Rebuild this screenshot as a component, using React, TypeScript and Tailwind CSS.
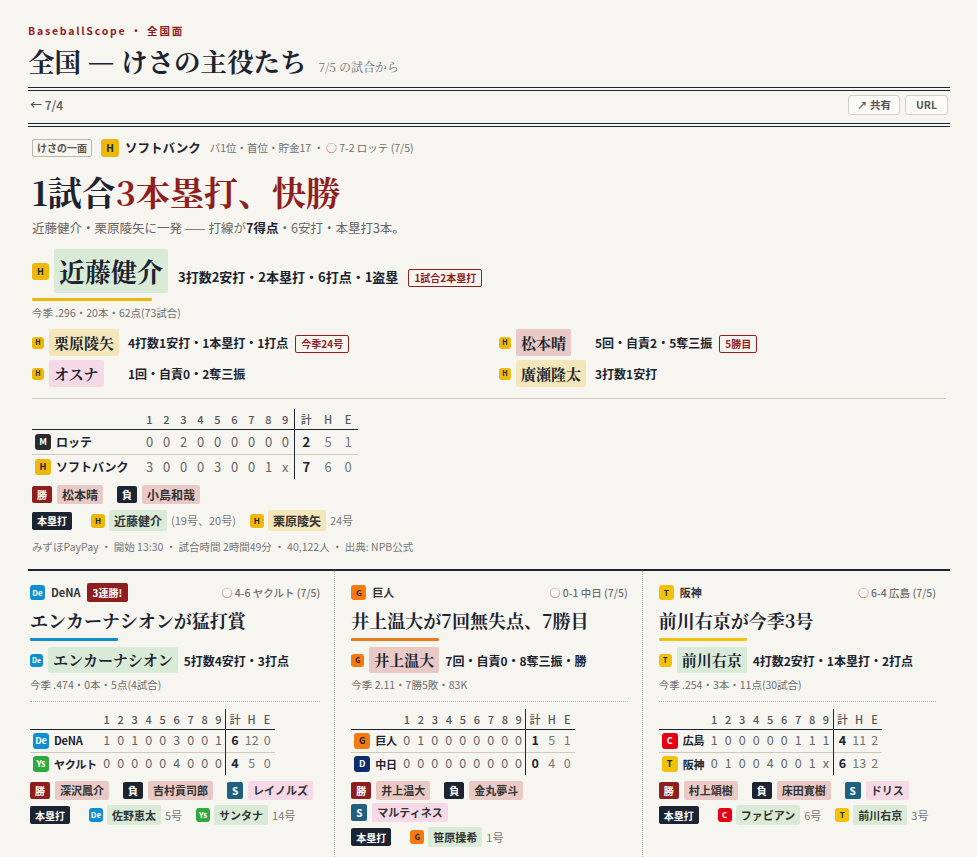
const serif = "font-['Noto_Serif_CJK_JP','Noto_Serif_JP','Liberation_Serif','Noto_Sans_CJK_JP',serif]";

const TEAM: Record<string, string> = {
  H: 'bg-[#eeb70c] text-[#1b2430]',
  T: 'bg-[#f2c10a] text-[#1b2430]',
  M: 'bg-[#2a2a2a] text-white',
  De: 'bg-[#0f8fd0] text-white',
  Ys: 'bg-[#2fa83f] text-white',
  G: 'bg-[#f47a10] text-[#1b2430]',
  D: 'bg-[#0c2e6e] text-white',
  C: 'bg-[#e60012] text-white',
};

const CHIP = {
  green: 'bg-[#d9ebd6]',
  yellow: 'bg-[#f3e6b8]',
  pink: 'bg-[#f6d9e6]',
  rose: 'bg-[#e8c9c5]',
};

type ChipColor = keyof typeof CHIP;

const LOGO_SIZES = {
  s12: 'w-[12px] h-[12px] text-[7px]',
  s13: 'w-[13px] h-[13px] text-[7px]',
  s14: 'w-[14px] h-[14px] text-[8px]',
  s15: 'w-[15px] h-[15px] text-[8px]',
  s16: 'w-[16px] h-[16px] text-[9px]',
  s17: 'w-[17px] h-[17px] text-[9px]',
  s18: 'w-[18px] h-[18px] text-[10px]',
};

function Logo({ team, size = 's14' }: { team: string; size?: keyof typeof LOGO_SIZES }) {
  return (
    <span className={`inline-flex shrink-0 items-center justify-center rounded-[3px] font-bold leading-none ${LOGO_SIZES[size]} ${TEAM[team]}`}>
      {team}
    </span>
  );
}

function Tag({ children }: { children: React.ReactNode }) {
  return (
    <span className="inline-block shrink-0 rounded-[2px] border border-[#8f1f1f] px-[5px] py-[1px] text-[10px] font-bold leading-[14px] text-[#8f1f1f]">
      {children}
    </span>
  );
}

function Hero() {
  return (
    <section className="px-[4px] pt-[12px] pb-[10px]">
      <div className="flex h-[18px] items-center">
        <span className="rounded-[2px] border border-[#bdb8ac] px-[4px] text-[10px] font-bold leading-[16px] text-[#555]">けさの一面</span>
        <span className="ml-[9px] flex"><Logo team="H" size="s18" /></span>
        <span className="ml-[6px] text-[12.5px] font-bold text-[#1b2430]">ソフトバンク</span>
        <span className="ml-[9px] text-[10.5px] text-[#6f6f6f]">パ1位・首位・貯金17 ・ <span className="text-[#8f1f1f]">◯</span> 7-2 ロッテ (7/5)</span>
      </div>
      <h2 className={`mt-[11px] text-[34px] font-bold leading-[48px] text-[#1b2430] ${serif}`}>
        1試合<span className="text-[#8f1f1f]">3本塁打、快勝</span>
      </h2>
      <p className="mt-[3px] text-[12.5px] leading-[18px] text-[#666]">
        近藤健介・栗原陵矢に一発 —— 打線が<b className="text-[#1b2430]">7得点</b>・6安打・本塁打3本。
      </p>
      <div className="mt-[12px] flex items-center">
        <Logo team="H" size="s17" />
        <span className={`ml-[5px] rounded-[2px] bg-[#d9ebd6] px-[5px] text-[26px] font-bold leading-[44px] text-[#1b2430] ${serif}`}>近藤健介</span>
        <span className="ml-[10px] pt-[12px] text-[13px] font-bold text-[#1b2430]">3打数2安打・2本塁打・6打点・1盗塁</span>
        <span className="ml-[10px] flex pt-[14px]"><Tag>1試合2本塁打</Tag></span>
      </div>
      <div className="mt-[5px] h-[3px] w-[120px] rounded-[1px] bg-[#eeb70c]" />
      <p className="mt-[4px] text-[10.5px] leading-[16px] text-[#6f6f6f]">今季 .296・20本・62点(73試合)</p>
      <div className="mt-[8px] grid grid-cols-2 gap-x-[20px] gap-y-[4px] border-b border-[#cfc9bb] pb-[11px]">
        <SubPlayer name="栗原陵矢" color="yellow" stat="4打数1安打・1本塁打・1打点" tag="今季24号" />
        <SubPlayer name="松本晴" color="rose" stat="5回・自責2・5奪三振" tag="5勝目" />
        <SubPlayer name="オスナ" color="pink" stat="1回・自責0・2奪三振" />
        <SubPlayer name="廣瀬隆太" color="yellow" stat="3打数1安打" />
      </div>
    </section>
  );
}

function SubPlayer({ name, color, stat, tag }: { name: string; color: ChipColor; stat: string; tag?: string }) {
  return (
    <div className="flex h-[27px] items-center">
      <Logo team="H" size="s12" />
      <span className="ml-[5px] w-[70px] shrink-0">
        <span className={`inline-block rounded-[2px] px-[5px] text-[15px] font-bold leading-[27px] text-[#1b2430] ${serif} ${CHIP[color]}`}>{name}</span>
      </span>
      <span className="ml-[9px] pt-[1px] text-[12px] font-bold text-[#1b2430]">{stat}</span>
      {tag && <span className="ml-[7px] flex pt-[3px]"><Tag>{tag}</Tag></span>}
    </div>
  );
}

type Line = { team: string; name: string; innings: string[]; r: string; h: string; e: string };

function Score({ lines, big }: { lines: Line[]; big?: boolean }) {
  const inningWidth = big ? 'w-[17px]' : 'w-[14px]';
  const digits = big ? 'text-[13px]' : 'text-[12.5px]';
  const rowH = big ? 'h-[25px]' : 'h-[23px]';
  const totals = big ? ['w-[24px]', 'w-[20px]', 'w-[20px]'] : ['w-[18px]', 'w-[16px]', 'w-[15px]'];
  return (
    <table className="border-collapse">
      <thead>
        <tr className="h-[20px] border-b border-[#1b2430] text-[11px] text-[#555]">
          <th className={`p-0 ${big ? 'w-[109px]' : ''}`} />
          {[1, 2, 3, 4, 5, 6, 7, 8, 9].map((n) => (
            <th key={n} className={`p-0 text-center font-medium ${inningWidth} ${n === 9 ? 'border-r border-[#1b2430]' : ''}`}>{n}</th>
          ))}
          <th className={`p-0 text-center font-medium ${totals[0]}`}>計</th>
          <th className={`p-0 text-center font-medium ${totals[1]}`}>H</th>
          <th className={`p-0 text-center font-medium ${totals[2]}`}>E</th>
        </tr>
      </thead>
      <tbody>
        {lines.map((l, i) => (
          <tr key={l.name} className={`${rowH} ${i === 0 ? 'border-b border-[#cfc9bb]' : ''}`}>
            <td className="p-0 pr-[3px]">
              <div className="flex items-center whitespace-nowrap pl-[3px]">
                <Logo team={l.team} size="s16" />
                <span className={`ml-[5px] font-bold text-[#1b2430] ${big ? 'text-[12px]' : 'text-[11px] tracking-[-0.25px]'}`}>{l.name}</span>
              </div>
            </td>
            {l.innings.map((v, j) => (
              <td key={j} className={`p-0 text-center text-[#666] ${digits} ${inningWidth} ${j === 8 ? 'border-r border-[#1b2430]' : ''}`}>{v}</td>
            ))}
            <td className={`p-0 text-center font-bold text-[#1b2430] ${digits}`}>{l.r}</td>
            <td className={`p-0 text-center text-[#777] ${digits}`}>{l.h}</td>
            <td className={`p-0 text-center text-[#777] ${digits}`}>{l.e}</td>
          </tr>
        ))}
      </tbody>
    </table>
  );
}

function Decision({ label, name, color, big }: { label: string; name: string; color: ChipColor; big?: boolean }) {
  const bg = label === '勝' ? 'bg-[#8f1f1f]' : label === '負' ? 'bg-[#1b2430]' : 'bg-[#1f5f7f]';
  return (
    <span className="inline-flex items-center">
      <span className={`inline-flex h-[17px] items-center justify-center rounded-[2px] text-[10px] font-bold text-white ${label === 'S' ? 'w-[16px]' : 'w-[20px]'} ${bg}`}>{label}</span>
      <span className={`ml-[5px] rounded-[2px] px-[5px] font-bold leading-[19px] text-[#333] ${big ? 'text-[12px]' : 'text-[11px]'} ${CHIP[color]}`}>{name}</span>
    </span>
  );
}

type Homer = { team: string; name: string; note: string; color?: ChipColor };

function Homers({ items, big }: { items: Homer[]; big?: boolean }) {
  return (
    <div className="flex items-center">
      <span className="inline-flex h-[18px] w-[40px] items-center justify-center rounded-[2px] bg-[#1b2430] text-[10px] font-bold text-white">本塁打</span>
      <span className="ml-[19px] flex items-center gap-x-[14px]">
        {items.map((h) => (
          <span key={h.name} className="inline-flex items-center">
            <Logo team={h.team} size="s14" />
            <span className={`ml-[4px] rounded-[2px] px-[5px] font-bold text-[#333] ${big ? 'text-[12px] leading-[21px]' : 'text-[11px] leading-[20px]'} ${CHIP[h.color ?? 'green']}`}>{h.name}</span>
            <span className="ml-[4px] text-[11px] text-[#777]">{h.note}</span>
          </span>
        ))}
      </span>
    </div>
  );
}

type Game = {
  team: string;
  name: string;
  streak?: string;
  result: string;
  title: string;
  accent: string;
  player: string;
  chip: ChipColor;
  stat: string;
  season: string;
  lines: Line[];
  decisions: { label: string; name: string; color: ChipColor }[][];
  homers: Homer[];
};

function split(s: string) {
  return s.split('');
}

const GAMES: Game[] = [
  {
    team: 'De',
    name: 'DeNA',
    streak: '3連勝!',
    result: '4-6 ヤクルト (7/5)',
    title: 'エンカーナシオンが猛打賞',
    accent: 'bg-[#0f8fd0]',
    player: 'エンカーナシオン',
    chip: 'green',
    stat: '5打数4安打・3打点',
    season: '今季 .474・0本・5点(4試合)',
    lines: [
      { team: 'De', name: 'DeNA', innings: split('101003001'), r: '6', h: '12', e: '0' },
      { team: 'Ys', name: 'ヤクルト', innings: split('000004000'), r: '4', h: '5', e: '0' },
    ],
    decisions: [[
      { label: '勝', name: '深沢鳳介', color: 'rose' },
      { label: '負', name: '吉村貢司郎', color: 'rose' },
      { label: 'S', name: 'レイノルズ', color: 'pink' },
    ]],
    homers: [
      { team: 'De', name: '佐野恵太', note: '5号' },
      { team: 'Ys', name: 'サンタナ', note: '14号' },
    ],
  },
  {
    team: 'G',
    name: '巨人',
    result: '0-1 中日 (7/5)',
    title: '井上温大が7回無失点、7勝目',
    accent: 'bg-[#e97b1c]',
    player: '井上温大',
    chip: 'rose',
    stat: '7回・自責0・8奪三振・勝',
    season: '今季 2.11・7勝5敗・83K',
    lines: [
      { team: 'G', name: '巨人', innings: split('010000000'), r: '1', h: '5', e: '1' },
      { team: 'D', name: '中日', innings: split('000000000'), r: '0', h: '4', e: '0' },
    ],
    decisions: [
      [
        { label: '勝', name: '井上温大', color: 'rose' },
        { label: '負', name: '金丸夢斗', color: 'rose' },
      ],
      [{ label: 'S', name: 'マルティネス', color: 'pink' }],
    ],
    homers: [{ team: 'G', name: '笹原操希', note: '1号' }],
  },
  {
    team: 'T',
    name: '阪神',
    result: '6-4 広島 (7/5)',
    title: '前川右京が今季3号',
    accent: 'bg-[#f2c10a]',
    player: '前川右京',
    chip: 'green',
    stat: '4打数2安打・1本塁打・2打点',
    season: '今季 .254・3本・11点(30試合)',
    lines: [
      { team: 'C', name: '広島', innings: split('100000111'), r: '4', h: '11', e: '2' },
      { team: 'T', name: '阪神', innings: split('01004001x'), r: '6', h: '13', e: '2' },
    ],
    decisions: [[
      { label: '勝', name: '村上頌樹', color: 'rose' },
      { label: '負', name: '床田寛樹', color: 'rose' },
      { label: 'S', name: 'ドリス', color: 'pink' },
    ]],
    homers: [
      { team: 'C', name: 'ファビアン', note: '6号' },
      { team: 'T', name: '前川右京', note: '3号' },
    ],
  },
];

function GameCard({ game, className }: { game: Game; className: string }) {
  return (
    <article className={`pt-[14px] pb-[10px] ${className}`}>
      <div className="flex h-[15px] items-center">
        <Logo team={game.team} size="s15" />
        <span className="ml-[6px] text-[11px] font-bold text-[#333]">{game.name}</span>
        {game.streak && (
          <span className="ml-[6px] rounded-[2px] bg-[#8f1f1f] px-[6px] text-[10px] font-bold leading-[19px] text-white">{game.streak}</span>
        )}
        <span className="ml-auto text-[10.5px] font-medium text-[#6f6f6f]"><span className="text-[#8f1f1f]">◯</span> {game.result}</span>
      </div>
      <h3 className={`mt-[7px] text-[18px] font-bold leading-[27px] text-[#1b2430] ${serif}`}>{game.title}</h3>
      <div className={`mt-[4px] h-[3px] w-[88px] rounded-[1px] ${game.accent}`} />
      <div className="mt-[6px] flex items-center">
        <Logo team={game.team} size="s13" />
        <span className={`ml-[5px] rounded-[2px] px-[5px] text-[15px] font-bold leading-[26px] text-[#1b2430] ${serif} ${CHIP[game.chip]}`}>{game.player}</span>
        <span className="ml-[6px] pt-[1px] text-[12px] font-bold text-[#1b2430]">{game.stat}</span>
      </div>
      <p className="mt-[4px] border-b border-dotted border-[#bdb8ac] pb-[8px] text-[10.5px] leading-[16px] text-[#6f6f6f]">{game.season}</p>
      <div className="mt-[7px]"><Score lines={game.lines} /></div>
      <div className="mt-[6px] flex flex-col gap-y-[3px]">
        {game.decisions.map((row, i) => (
          <div key={i} className="flex items-center gap-x-[14px]">
            {row.map((d) => <Decision key={d.label} {...d} />)}
          </div>
        ))}
      </div>
      <div className="mt-[5px]"><Homers items={game.homers} /></div>
    </article>
  );
}

export default function App() {
  return (
    <div className="min-h-[857px] overflow-hidden bg-[#f7f5f0] px-[28px] pt-[24px] font-['Noto_Sans_CJK_JP','Noto_Sans',sans-serif] text-[#1b2430]">
      <div className="w-[922px]">
        <div className="text-[10.5px] font-bold leading-[14px] tracking-[0.17em] text-[#8f1f1f]">BaseballScope ・ 全国面</div>
        <div className="mt-[4px] flex items-baseline">
          <h1 className={`text-[26.5px] font-bold leading-[38px] text-[#1b2430] ${serif}`}>全国 <span className="text-[30px] leading-none font-normal">—</span> けさの主役たち</h1>
          <span className={`ml-[12px] text-[12px] text-[#6f6f6f] ${serif}`}>7/5 の試合から</span>
        </div>
        <div className="mt-[7px] border-y-[4px] border-double border-[#1b2430]">
          <div className="flex h-[32px] items-center justify-between px-[2px] pb-[4px]">
            <span className="text-[12px] font-medium text-[#555]">← 7/4</span>
            <span className="flex gap-x-[5px]">
              <span className="rounded-[3px] border border-[#d3cfc4] bg-[#fbfaf7] px-[8px] text-[10.5px] font-bold leading-[18px] text-[#555]">↗ 共有</span>
              <span className="rounded-[3px] border border-[#d3cfc4] bg-[#fbfaf7] px-[10px] text-[10.5px] font-bold leading-[18px] text-[#555]">URL</span>
            </span>
          </div>
        </div>

        <Hero />

        <div className="px-[4px]">
          <Score big lines={[
            { team: 'M', name: 'ロッテ', innings: split('002000000'), r: '2', h: '5', e: '1' },
            { team: 'H', name: 'ソフトバンク', innings: split('30003001x'), r: '7', h: '6', e: '0' },
          ]} />
          <div className="mt-[6px] flex items-center gap-x-[14px]">
            <Decision big label="勝" name="松本晴" color="rose" />
            <Decision big label="負" name="小島和哉" color="rose" />
          </div>
          <div className="mt-[6px]">
            <Homers big items={[
              { team: 'H', name: '近藤健介', note: '(19号、20号)' },
              { team: 'H', name: '栗原陵矢', note: '24号', color: 'yellow' },
            ]} />
          </div>
          <p className="mt-[8px] text-[10.5px] leading-[16px] text-[#777]">みずほPayPay ・ 開始 13:30 ・ 試合時間 2時間49分 ・ 40,122人 ・ 出典: NPB公式</p>
        </div>

        <div className="mt-[14px] grid grid-cols-3 border-t-2 border-[#1b2430]">
          <GameCard game={GAMES[0]} className="border-r border-dotted border-[#bdb8ac] pl-[2px] pr-[14px]" />
          <GameCard game={GAMES[1]} className="border-r border-dotted border-[#bdb8ac] pl-[16px] pr-[14px]" />
          <GameCard game={GAMES[2]} className="pl-[16px] pr-[14px]" />
        </div>
      </div>
    </div>
  );
}
